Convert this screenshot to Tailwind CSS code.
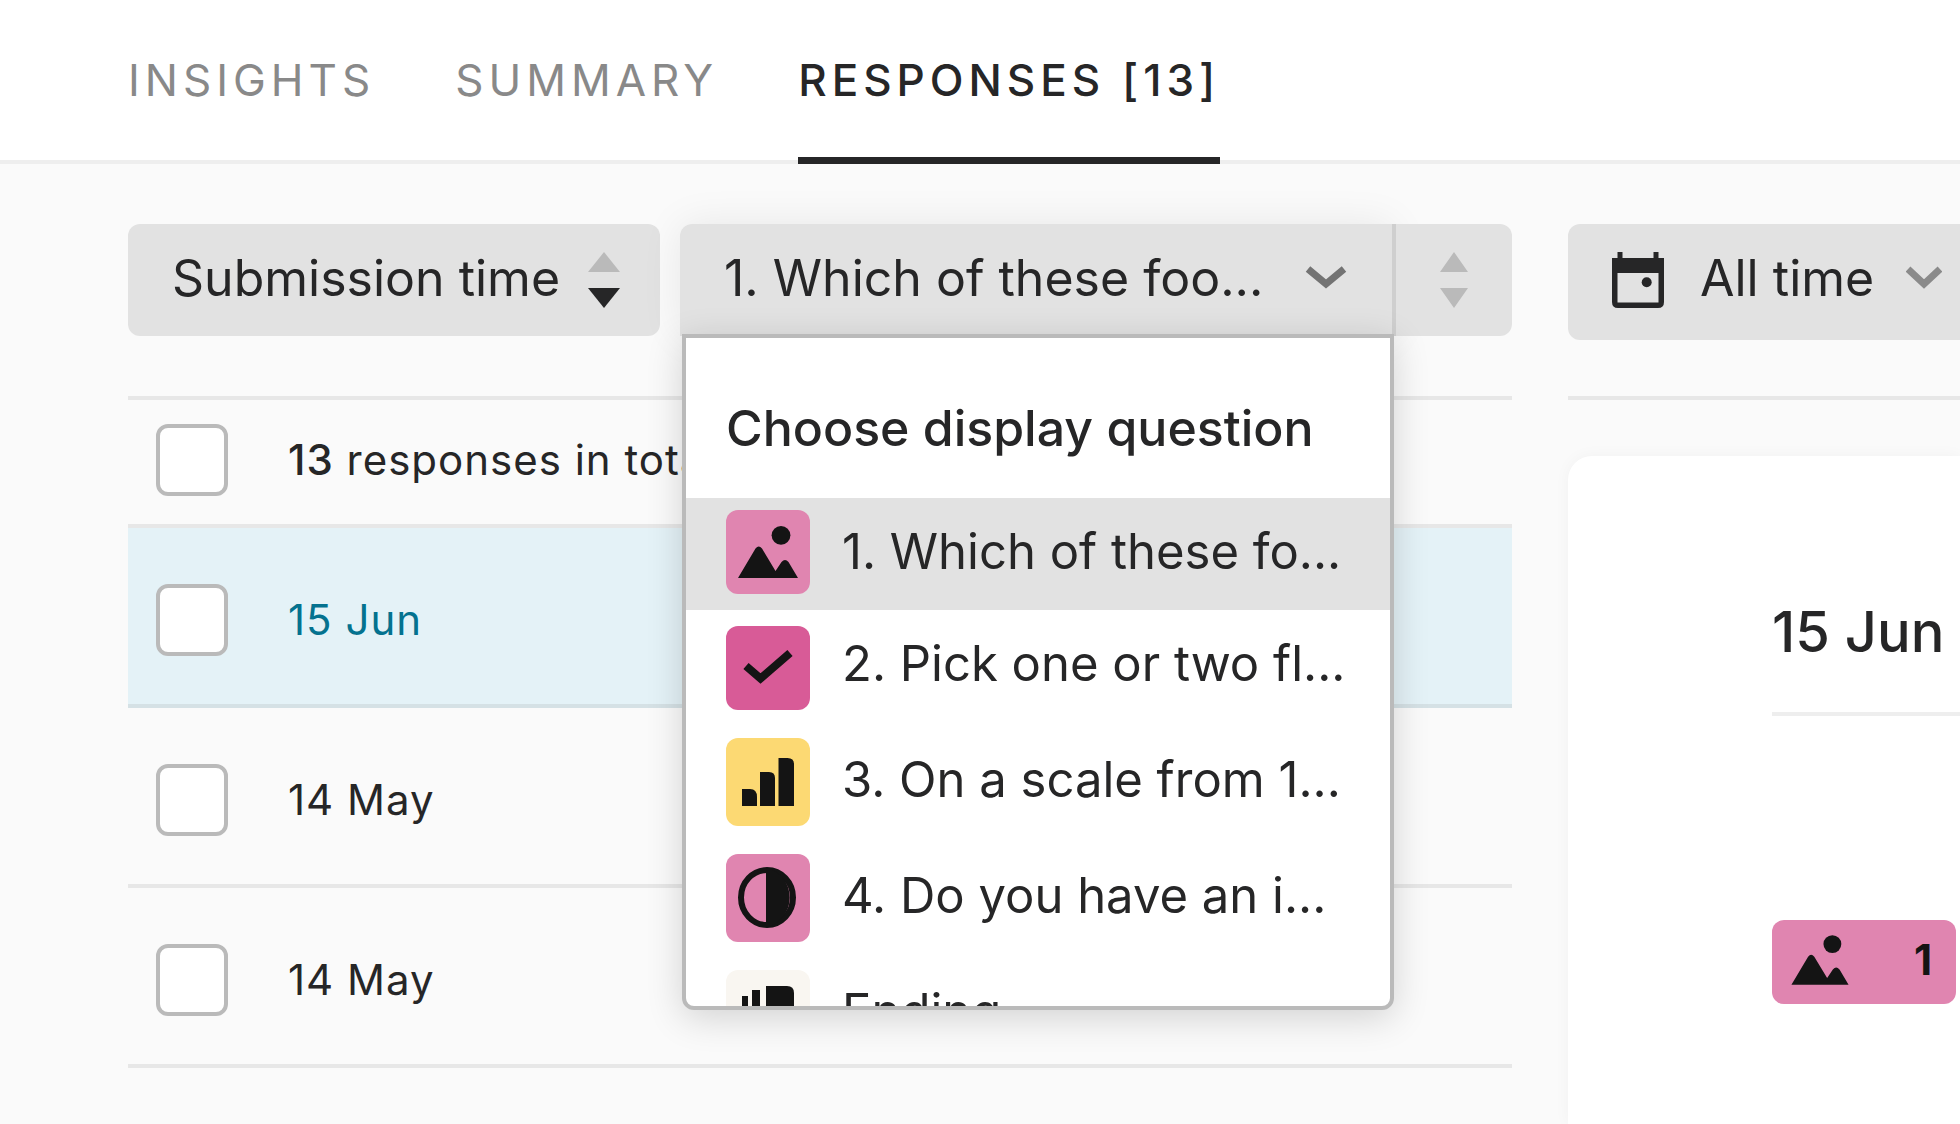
<!DOCTYPE html>
<html lang="en">
<head>
  <meta charset="UTF-8" />
  <meta name="viewport" content="width=device-width, initial-scale=1" />
  <title>Responses</title>
  <script src="https://cdn.jsdelivr.net/npm/@tailwindcss/browser@4"></script>
</head>
<body class="min-h-screen overflow-x-hidden bg-[#fafafa] font-['Inter',sans-serif] text-[#262627]">
  <svg class="hidden">
    <symbol id="picture" viewBox="0 0 84 84">
      <circle cx="55" cy="25.3" r="9.4" />
      <path d="M12 68 L29.5 38.5 Q32.7 34.5 36 38.5 L49.5 61 L55.5 52 Q59 48 62.500 52 L72 68 Z" />
    </symbol>
  </svg>

  <!-- Tabs -->
  <nav class="flex h-41 gap-20 border-b-4 border-[#eeeeee] bg-white pl-32 text-[44px] leading-[56px] tracking-[5px] whitespace-nowrap">
    <a href="#insights" class="-mb-1 pt-[52px] text-[#898989]">INSIGHTS</a>
    <a href="#summary" class="-mb-1 pt-[52px] text-[#898989]">SUMMARY</a>
    <a href="#responses" class="-mb-1 border-b-[7px] border-[#262627] pt-[52px] font-medium">RESPONSES [13]</a>
  </nav>

  <main class="grid grid-cols-[minmax(0,173fr)_minmax(0,49fr)] gap-x-14 pt-15 pl-32">
    <section>
      <!-- Sorting and display question -->
      <div class="flex h-28 gap-5 text-[50px] leading-[60px] whitespace-nowrap">
        <button type="button" class="flex w-[532px] flex-none items-center justify-between rounded-xl bg-[#e2e2e2] pr-10 pb-1 pl-11">
          Submission time
          <svg class="mt-1 h-14 w-8" viewBox="0 0 32 56">
            <path d="M16 0 L32 20 H0 Z" fill="#bababa" />
            <path d="M16 56 L32 36 H0 Z" fill="#262627" />
          </svg>
        </button>
        <div class="flex min-w-0 flex-1">
          <div class="relative min-w-0 flex-1 rounded-tl-xl shadow-[0_0_40px_rgba(0,0,0,0.08)]">
            <button type="button" aria-expanded="true" class="flex h-full w-full items-center justify-between rounded-tl-xl bg-[#e2e2e2] pr-11 pb-1 pl-11">
              <span class="truncate">1. Which of these foo...</span>
              <svg class="h-6 w-11 flex-none" viewBox="0 0 44 24" fill="none" stroke="#737373" stroke-width="7">
                <path d="M4 3 L22 18 L40 3" />
              </svg>
            </button>
            <div class="absolute top-[110px] -right-0.5 left-0.5 z-20 max-h-[676px] overflow-hidden rounded-b-xl border-4 border-[#bababa] bg-white shadow-[0_8px_36px_rgba(0,0,0,0.16)]">
              <h2 class="px-10 pt-15 pb-10 font-medium">Choose display question</h2>
              <ul class="text-[49px]">
                <li>
                  <button type="button" class="flex h-28 w-full items-start gap-8 bg-[#e2e2e2] px-10 text-left">
                    <svg class="mt-3 h-21 w-21 flex-none rounded-xl bg-[#e085b0]" fill="#141414"><use href="#picture" /></svg>
                    <span class="pt-6">1. Which of these fo...</span>
                  </button>
                </li>
                <li>
                  <button type="button" class="flex h-29 w-full items-start gap-8 px-10 text-left">
                    <svg class="mt-4 h-21 w-21 flex-none rounded-xl bg-[#d85b97]" viewBox="0 0 84 84" fill="none" stroke="#141414" stroke-width="8">
                      <path d="M20 40 L34.500 52.500 L64 27" />
                    </svg>
                    <span class="pt-6">2. Pick one or two fl...</span>
                  </button>
                </li>
                <li>
                  <button type="button" class="flex h-29 w-full items-start gap-8 px-10 text-left">
                    <svg class="mt-3 h-22 w-21 flex-none rounded-xl bg-[#fcd973]" viewBox="0 0 84 88" fill="#141414">
                      <path d="M16 51 h8 q7 0 7 8 v9 h-15 Z M34 34 h9 q6 0 6 6 v28 h-15 Z M52.500 20 h9 q6.500 0 6.500 6 v42 h-15.500 Z" />
                    </svg>
                    <span class="pt-6">3. On a scale from 1...</span>
                  </button>
                </li>
                <li>
                  <button type="button" class="flex h-29 w-full items-start gap-8 px-10 text-left">
                    <svg class="mt-3 h-22 w-21 flex-none rounded-xl bg-[#e085b0]" viewBox="0 0 84 88">
                      <ellipse cx="41" cy="43.500" rx="26" ry="27.500" fill="none" stroke="#141414" stroke-width="6" />
                      <path d="M40 14 A29 30 0 0 1 40 73 Z" fill="#141414" />
                    </svg>
                    <span class="pt-6">4. Do you have an i...</span>
                  </button>
                </li>
                <li>
                  <button type="button" class="flex h-29 w-full items-start gap-8 px-10 text-left">
                    <svg class="mt-3 h-22 w-21 flex-none rounded-xl bg-[#f9f6f1]" viewBox="0 0 84 88" fill="#141414">
                      <path d="M16 26 h6 v36 h-6 Z M26 20 h8 v48 h-8 Z M40 16 h21 q7 0 7 7 v49 h-28 Z" />
                    </svg>
                    <span class="pt-6">Ending</span>
                  </button>
                </li>
              </ul>
            </div>
          </div>
          <button type="button" aria-label="Sort by question" class="relative z-10 flex w-30 flex-none items-center justify-center rounded-r-xl border-l-4 border-[#cfcfcf] bg-[#e2e2e2]">
            <svg class="h-14 w-7" viewBox="0 0 28 56" fill="#bababa">
              <path d="M14 0 L28 20 H0 Z M14 56 L28 36 H0 Z" />
            </svg>
          </button>
        </div>
      </div>

      <!-- Response list -->
      <ul class="mt-15 border-t-4 border-[#e7e7e7] text-[42px] leading-[52px] tracking-[1px]">
        <li class="flex h-32 items-start border-b-4 border-[#e7e7e7] pt-6 pl-7">
          <input id="all" type="checkbox" class="h-18 w-18 flex-none appearance-none rounded-xl border-4 border-[#bababa] bg-white" />
          <label for="all" class="pt-2.5 pl-15"><span class="font-medium">13</span> responses in total</label>
        </li>
        <li class="flex h-45 items-start border-b-4 border-[#d5e1e5] bg-[#e4f2f7] pt-14 pl-7">
          <input id="r1" type="checkbox" class="h-18 w-18 flex-none appearance-none rounded-xl border-4 border-[#bababa] bg-white" />
          <label for="r1" class="pt-2.5 pl-15 text-[#04728f]">15 Jun</label>
        </li>
        <li class="flex h-45 items-start border-b-4 border-[#e7e7e7] pt-14 pl-7">
          <input id="r2" type="checkbox" class="h-18 w-18 flex-none appearance-none rounded-xl border-4 border-[#bababa] bg-white" />
          <label for="r2" class="pt-2.5 pl-15">14 May</label>
        </li>
        <li class="flex h-45 items-start border-b-4 border-[#e7e7e7] pt-14 pl-7">
          <input id="r3" type="checkbox" class="h-18 w-18 flex-none appearance-none rounded-xl border-4 border-[#bababa] bg-white" />
          <label for="r3" class="pt-2.5 pl-15">14 May</label>
        </li>
      </ul>
    </section>

    <!-- Selected response -->
    <section class="flex flex-col">
      <button type="button" class="flex h-29 items-center rounded-l-xl bg-[#e2e2e2] pb-2 pl-11 text-[50px] leading-[60px] whitespace-nowrap">
        <svg class="mt-1 h-14 w-13 flex-none" viewBox="0 0 52 56" fill="#262627">
          <path fill-rule="evenodd" d="M5.500 0 h5 v6 h31 v-6 h5 v6 h5.500 v44 q0 6 -6 6 h-40 q-6 0 -6 -6 v-44 h5.500 Z M5.500 21 v29.500 h41 v-29.500 Z" />
          <circle cx="34.700" cy="30.300" r="5" />
        </svg>
        <span class="pl-9">All time</span>
        <svg class="ml-8 h-6 w-9 flex-none" viewBox="0 0 36 24" fill="none" stroke="#8a8a8a" stroke-width="7">
          <path d="M2 3 L18 18 L34 3" />
        </svg>
      </button>
      <div class="mt-14 flex-1 border-t-4 border-[#e7e7e7] pt-14">
        <article class="h-full min-h-[668px] rounded-tl-3xl bg-white pt-35 pl-51 shadow-[0_0_16px_rgba(0,0,0,0.04)]">
          <h2 class="border-b-4 border-[#eeeeee] pb-11 text-[56px] leading-[72px] font-medium whitespace-nowrap">15 Jun</h2>
          <div class="mt-51 mr-1 flex h-21 items-center justify-between rounded-xl bg-[#e085b0] pr-6 pb-1 pl-2 text-[42px] leading-[52px] font-bold text-[#141414]">
            <svg class="h-21 w-20" viewBox="0 0 84 84" fill="#141414"><use href="#picture" /></svg>
            1
          </div>
        </article>
      </div>
    </section>
  </main>
</body>
</html>
